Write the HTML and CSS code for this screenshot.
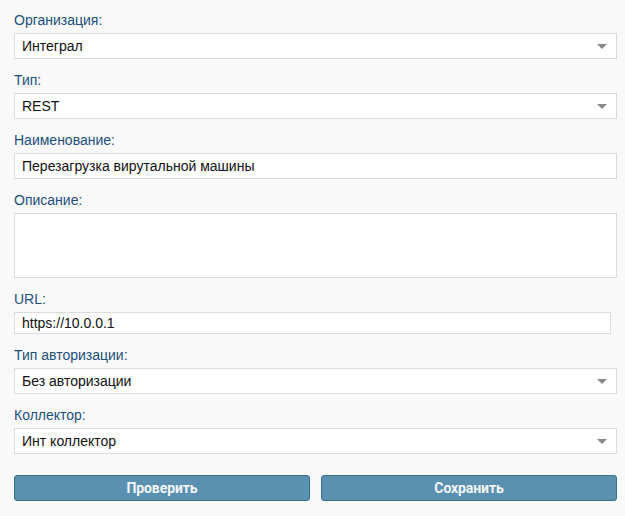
FILE: index.html
```html
<!DOCTYPE html>
<html lang="ru">
<head>
<meta charset="utf-8">
<link rel="stylesheet" href="styles.css">
</head>
<body>
<form class="form">
  <div class="group">
    <label class="label">Организация:</label>
    <div class="select"><span>Интеграл</span><i class="arrow"></i></div>
  </div>
  <div class="group">
    <label class="label">Тип:</label>
    <div class="select"><span>REST</span><i class="arrow"></i></div>
  </div>
  <div class="group">
    <label class="label">Наименование:</label>
    <div class="input">Перезагрузка вирутальной машины</div>
  </div>
  <div class="group">
    <label class="label">Описание:</label>
    <div class="textarea"></div>
  </div>
  <div class="group">
    <label class="label">URL:</label>
    <div class="input input-url">https://10.0.0.1</div>
  </div>
  <div class="group">
    <label class="label">Тип авторизации:</label>
    <div class="select"><span>Без авторизации</span><i class="arrow"></i></div>
  </div>
  <div class="group">
    <label class="label">Коллектор:</label>
    <div class="select"><span>Инт коллектор</span><i class="arrow"></i></div>
  </div>
  <div class="buttons">
    <button type="button" class="btn">Проверить</button>
    <button type="button" class="btn">Сохранить</button>
  </div>
</form>
</body>
</html>
```
FILE: styles.css
```css
html, body {
  margin: 0;
  padding: 0;
  background: #f9f9f9;
}
body {
  font-family: "Liberation Sans", Arial, sans-serif;
  font-size: 14px;
  color: #111;
}
.form {
  padding: 10px 8px 0 14px;
}
.group {
  margin-bottom: 11px;
}
.label {
  display: block;
  line-height: 20px;
  margin-bottom: 3px;
  color: #1d4f7c;
}
.select, .input, .textarea {
  box-sizing: border-box;
  background: #fff;
  border: 1px solid #dcdcdc;
  width: 603px;
}
.select {
  height: 26px;
  display: flex;
  align-items: center;
  justify-content: space-between;
  padding: 0 9px 0 7px;
}
.arrow {
  width: 0;
  height: 0;
  border-left: 5px solid transparent;
  border-right: 5px solid transparent;
  border-top: 5px solid #888;
}
.input {
  height: 26px;
  line-height: 24px;
  padding: 0 7px;
}
.input-url {
  width: 597px;
  height: 22px;
  line-height: 20px;
}
.textarea {
  height: 65px;
}
.buttons {
  display: flex;
  gap: 11px;
  width: 603px;
  padding-top: 10px;
}
.btn {
  flex: 1;
  height: 26px;
  background: #5a91b0;
  border: 1px solid #3d6e8c;
  border-radius: 3px;
  color: #f2f6f9;
  font-family: Roboto, "Liberation Sans", sans-serif;
  font-weight: 700;
  font-size: 14px;
  letter-spacing: -0.1px;
  padding: 0;
}
```
